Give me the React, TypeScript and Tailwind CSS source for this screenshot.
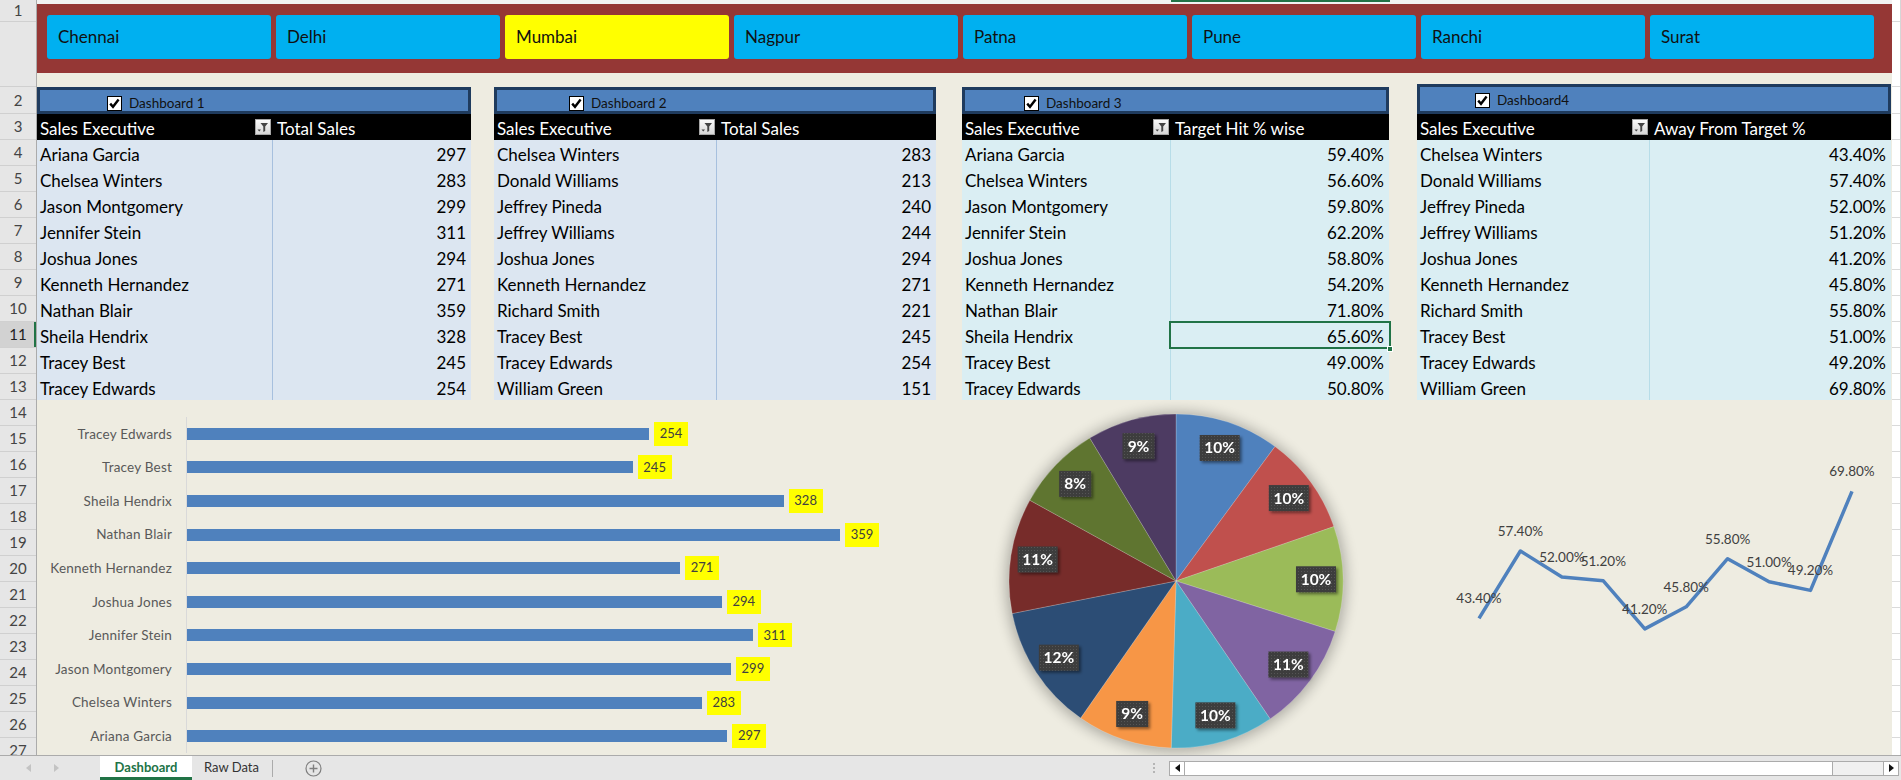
import React from 'react';

type Row = [string, string];

const t1: Row[] = [
  ['Ariana Garcia', '297'],
  ['Chelsea Winters', '283'],
  ['Jason Montgomery', '299'],
  ['Jennifer Stein', '311'],
  ['Joshua Jones', '294'],
  ['Kenneth Hernandez', '271'],
  ['Nathan Blair', '359'],
  ['Sheila Hendrix', '328'],
  ['Tracey Best', '245'],
  ['Tracey Edwards', '254'],
];
const t2: Row[] = [
  ['Chelsea Winters', '283'],
  ['Donald Williams', '213'],
  ['Jeffrey Pineda', '240'],
  ['Jeffrey Williams', '244'],
  ['Joshua Jones', '294'],
  ['Kenneth Hernandez', '271'],
  ['Richard Smith', '221'],
  ['Tracey Best', '245'],
  ['Tracey Edwards', '254'],
  ['William Green', '151'],
];
const t3: Row[] = [
  ['Ariana Garcia', '59.40%'],
  ['Chelsea Winters', '56.60%'],
  ['Jason Montgomery', '59.80%'],
  ['Jennifer Stein', '62.20%'],
  ['Joshua Jones', '58.80%'],
  ['Kenneth Hernandez', '54.20%'],
  ['Nathan Blair', '71.80%'],
  ['Sheila Hendrix', '65.60%'],
  ['Tracey Best', '49.00%'],
  ['Tracey Edwards', '50.80%'],
];
const t4: Row[] = [
  ['Chelsea Winters', '43.40%'],
  ['Donald Williams', '57.40%'],
  ['Jeffrey Pineda', '52.00%'],
  ['Jeffrey Williams', '51.20%'],
  ['Joshua Jones', '41.20%'],
  ['Kenneth Hernandez', '45.80%'],
  ['Richard Smith', '55.80%'],
  ['Tracey Best', '51.00%'],
  ['Tracey Edwards', '49.20%'],
  ['William Green', '69.80%'],
];

const cities = ['Chennai', 'Delhi', 'Mumbai', 'Nagpur', 'Patna', 'Pune', 'Ranchi', 'Surat'];

const rowHeads: { label: string; cls: string; sel?: boolean }[] = [
  { label: '1', cls: 'h-[22px]' },
  { label: '', cls: 'h-[65px]' },
  { label: '2', cls: 'h-[27px]' },
  ...Array.from({ length: 25 }, (_, i) => ({ label: String(i + 3), cls: 'h-[26px]', sel: i + 3 === 11 })),
];

const barData: Row[] = [
  ['Tracey Edwards', '254'],
  ['Tracey Best', '245'],
  ['Sheila Hendrix', '328'],
  ['Nathan Blair', '359'],
  ['Kenneth Hernandez', '271'],
  ['Joshua Jones', '294'],
  ['Jennifer Stein', '311'],
  ['Jason Montgomery', '299'],
  ['Chelsea Winters', '283'],
  ['Ariana Garcia', '297'],
];

const pieColors = ['#4F81BD', '#C0504D', '#9BBB59', '#8064A2', '#4BACC6', '#F79646', '#2C4D75', '#772C2A', '#5F7530', '#4D3B62'];

function CheckBox() {
  return (
    <svg width="15" height="15" viewBox="0 0 15 15" className="shrink-0">
      <rect x="0.5" y="0.5" width="14" height="14" fill="#fff" stroke="#000" />
      <path d="M3.2 7.6 L6 10.8 L11.6 3.6" fill="none" stroke="#000" strokeWidth="2.4" strokeLinejoin="miter" />
    </svg>
  );
}

function FilterIcon() {
  return (
    <svg width="16" height="16" viewBox="0 0 16 16" className="shrink-0">
      <defs>
        <linearGradient id="fg" x1="0" y1="0" x2="0" y2="1">
          <stop offset="0" stopColor="#fbfbfb" />
          <stop offset="1" stopColor="#d6d6d6" />
        </linearGradient>
      </defs>
      <rect x="0.5" y="0.5" width="15" height="15" fill="url(#fg)" stroke="#a6a6a6" />
      <path d="M5.5 4 H13 L10.2 7.4 V12 L8.3 13 V7.4 Z" fill="#444" />
      <path d="M2.5 10.5 H6 L4.25 12.5 Z" fill="#444" />
    </svg>
  );
}

function Dash({
  title,
  rows,
  wrap,
  bar,
  chkPad,
  w1,
  h2,
  bg,
  divider,
  sel,
}: {
  title: string;
  rows: Row[];
  wrap: string;
  bar: string;
  chkPad: string;
  w1: string;
  h2: string;
  bg: string;
  divider: string;
  sel?: number;
}) {
  return (
    <div className={`${wrap} flex flex-col shrink-0`}>
      <div className={`${bar} ${chkPad} bg-[#4f81bd] border-[3px] border-[#1f3b5e] flex items-end gap-[7px]`}>
        <CheckBox />
        <span className="text-[13.5px] leading-[16px] text-[#111]">{title}</span>
      </div>
      <div className="h-[26px] bg-black text-white text-[17px] flex">
        <div className={`${w1} flex items-center justify-between pl-[3px] pr-[2px]`}>
          <span className="h-[26px] leading-[24px] pt-[3px]">Sales Executive</span>
          <FilterIcon />
        </div>
        <div className="flex-1 pl-[4px] h-[26px] leading-[24px] pt-[3px]">{h2}</div>
      </div>
      {rows.map((r, i) => (
        <div key={i} className={`h-[26px] flex text-[17px] text-black ${bg}`}>
          <div className={`${w1} ${divider} border-r pl-[3px] leading-[24px] pt-[3px] whitespace-nowrap`}>{r[0]}</div>
          <div className="flex-1 relative text-right pr-[5px] leading-[24px] pt-[3px]">
            {r[1]}
            {sel === i && (
              <>
                <div className="absolute -left-[2px] -top-[1px] -right-[2px] -bottom-[1px] border-2 border-[#217346]" />
                <div className="absolute -right-[4px] -bottom-[4px] w-[6px] h-[6px] bg-[#217346] border border-white" />
              </>
            )}
          </div>
        </div>
      ))}
    </div>
  );
}

function BarChart() {
  return (
    <div className="w-[943px] shrink-0 flex pt-[17px]">
      <div className="w-[149px] flex flex-col">
        {barData.map((r, i) => (
          <div key={i} className="h-[33.6px] flex items-center justify-end pr-[14px] text-[13.5px] text-[#595959] tracking-[0.2px]">
            {r[0]}
          </div>
        ))}
      </div>
      <div className="h-[336px] border-l border-[#d9d9d9] flex flex-col">
        {barData.map((r, i) => (
          <div key={i} className="h-[33.6px] flex items-center">
            <div className="h-[12px] bg-[#4f81bd]" style={{ width: `${Number(r[1]) * 1.819}px` }} />
            <div className="ml-[5px] w-[34px] h-[24px] bg-[#ffff00] flex items-center justify-center text-[13px] text-[#404040]">
              {r[1]}
            </div>
          </div>
        ))}
      </div>
    </div>
  );
}

function PieChart() {
  const vals = t1.map((r) => Number(r[1]));
  const total = vals.reduce((a, b) => a + b, 0);
  const cx = 196;
  const cy = 181;
  const r = 167;
  let acc = 0;
  const slices = vals.map((v, i) => {
    const a0 = (acc / total) * 2 * Math.PI;
    acc += v;
    const a1 = (acc / total) * 2 * Math.PI;
    const p = (a: number) => [cx + r * Math.sin(a), cy - r * Math.cos(a)];
    const [x0, y0] = p(a0);
    const [x1, y1] = p(a1);
    const d = `M${cx},${cy} L${x0.toFixed(2)},${y0.toFixed(2)} A${r},${r} 0 0 1 ${x1.toFixed(2)},${y1.toFixed(2)} Z`;
    const mid = (a0 + a1) / 2;
    const lx = cx + 140 * Math.sin(mid);
    const ly = cy - 140 * Math.cos(mid);
    const pct = `${Math.round((v / total) * 100)}%`;
    return { d, lx, ly, pct, color: pieColors[i] };
  });
  return (
    <svg width="420" height="355" className="shrink-0">
      <defs>
        <filter id="pshadow" x="-20%" y="-20%" width="140%" height="140%">
          <feGaussianBlur stdDeviation="7" />
        </filter>
        <filter id="lshadow" x="-30%" y="-30%" width="160%" height="160%">
          <feDropShadow dx="2" dy="2" stdDeviation="1.5" floodColor="#000" floodOpacity="0.45" />
        </filter>
        <pattern id="dots" width="3" height="3" patternUnits="userSpaceOnUse">
          <rect width="3" height="3" fill="#3d3d3d" />
          <rect width="1" height="1" fill="#555" />
        </pattern>
      </defs>
      <circle cx={cx} cy={cy + 1} r={r + 3} fill="#000" opacity="0.28" filter="url(#pshadow)" />
      {slices.map((s, i) => (
        <path key={i} d={s.d} fill={s.color} stroke="#ffffff" strokeOpacity="0.25" strokeWidth="0.8" />
      ))}
      {slices.map((s, i) => {
        const w = s.pct.length === 3 ? 40 : 32;
        return (
          <g key={i} filter="url(#lshadow)">
            <rect x={s.lx - w / 2} y={s.ly - 13} width={w} height={26} fill="url(#dots)" />
            <text x={s.lx} y={s.ly + 5.5} textAnchor="middle" fill="#fff" fontSize="15.5" fontWeight="700">
              {s.pct}
            </text>
          </g>
        );
      })}
    </svg>
  );
}

function LineChart() {
  const vals = t4.map((r) => parseFloat(r[1]));
  const pts = vals.map((v, i) => [79 + i * 41.44, 151 - (v - 57.4) * 4.81]);
  return (
    <svg width="492" height="355" className="shrink-0">
      <polyline
        points={pts.map((p) => `${p[0].toFixed(1)},${p[1].toFixed(1)}`).join(' ')}
        fill="none"
        stroke="#4F81BD"
        strokeWidth="3.5"
        strokeLinejoin="round"
      />
      {pts.map((p, i) => (
        <text key={i} x={p[0]} y={p[1] - 15} textAnchor="middle" fontSize="13.5" fill="#404040">
          {t4[i][1]}
        </text>
      ))}
    </svg>
  );
}

function Tri({ dir, cls }: { dir: 'l' | 'r'; cls: string }) {
  return (
    <svg width="5" height="8" viewBox="0 0 5 8" className={cls}>
      {dir === 'l' ? <path d="M5 0 V8 L0 4 Z" /> : <path d="M0 0 V8 L5 4 Z" />}
    </svg>
  );
}

function TabBar() {
  return (
    <div className="h-[25px] border-t border-[#ababab] bg-[#e6e6e6] flex items-stretch text-[13px] shrink-0">
      <div className="w-[100px] flex items-center pl-[26px] gap-[23px]">
        <Tri dir="l" cls="fill-[#c3c3c3]" />
        <Tri dir="r" cls="fill-[#c3c3c3]" />
      </div>
      <div className="w-[92px] bg-white flex items-center justify-center font-bold text-[#217346] border-b-[3px] border-[#217346] pt-[2px]">
        Dashboard
      </div>
      <div className="w-[80px] flex items-center pl-[12px] text-[#333]">Raw Data</div>
      <div className="w-px h-[17px] self-center bg-[#ababab]" />
      <div className="ml-[32px] flex items-center">
        <svg width="17" height="17" viewBox="0 0 17 17">
          <circle cx="8.5" cy="8.5" r="7.5" fill="none" stroke="#7f7f7f" strokeWidth="1.2" />
          <path d="M8.5 4.5 V12.5 M4.5 8.5 H12.5" stroke="#7f7f7f" strokeWidth="1.4" />
        </svg>
      </div>
      <div className="flex-1" />
      <div className="w-[2px] flex flex-col justify-center gap-[2px]">
        <div className="h-[2px] bg-[#b5b5b5]" />
        <div className="h-[2px] bg-[#b5b5b5]" />
        <div className="h-[2px] bg-[#b5b5b5]" />
      </div>
      <div className="ml-[14px] mr-[2px] w-[730px] h-[15px] self-center border border-[#ababab] flex bg-white">
        <div className="w-[15px] border-r border-[#ababab] flex items-center justify-center">
          <Tri dir="l" cls="fill-[#111]" />
        </div>
        <div className="flex-1 bg-white" />
        <div className="w-[51px] bg-[#f0f0f0] border-l border-[#ababab]" />
        <div className="w-[15px] border-l border-[#ababab] flex items-center justify-center bg-white">
          <Tri dir="r" cls="fill-[#111]" />
        </div>
      </div>
    </div>
  );
}

export default function App() {
  return (
    <div className="w-[1901px] h-[780px] overflow-hidden flex flex-col bg-[#eeece1] [font-family:Lato,sans-serif]">
      <div className="h-[755px] flex overflow-hidden shrink-0">
        <div className="w-[37px] shrink-0 bg-[#e6e6e6] border-r border-[#ababab] flex flex-col">
          {rowHeads.map((r, i) => (
            <div
              key={i}
              className={`${r.cls} shrink-0 flex items-center justify-center border-b border-[#d0d0d0] text-[15px] ${
                r.sel ? 'bg-[#d2d2d2] text-[#222] shadow-[inset_-2px_0_0_#217346]' : 'text-[#444]'
              }`}
            >
              {r.label}
            </div>
          ))}
        </div>

        <div className="w-[1855px] shrink-0 flex flex-col">
          <div className="h-[4px] flex bg-[#f2f2f2] shrink-0">
            <div className="w-[1134px]" />
            <div className="w-[219px] h-[2px] bg-[#217346]" />
          </div>
          <div className="h-[69px] bg-[#953735] flex gap-[5px] pl-[10px] pt-[11px] shrink-0">
            {cities.map((c) => (
              <div
                key={c}
                className={`w-[224px] h-[44px] rounded-[3px] flex items-center pl-[11px] text-[17px] text-[#111] ${
                  c === 'Mumbai' ? 'bg-[#ffff00]' : 'bg-[#00b0f0]'
                }`}
              >
                {c}
              </div>
            ))}
          </div>
          <div className="h-[11px] shrink-0" />
          <div className="h-[316px] flex items-end shrink-0">
            <Dash
              title="Dashboard 1"
              rows={t1}
              wrap="w-[434px]"
              bar="h-[27px]"
              chkPad="pl-[67px]"
              w1="w-[236px]"
              h2="Total Sales"
              bg="bg-[#dce6f1]"
              divider="border-[#a7c0de]"
            />
            <Dash
              title="Dashboard 2"
              rows={t2}
              wrap="w-[442px] ml-[23px]"
              bar="h-[27px]"
              chkPad="pl-[72px]"
              w1="w-[223px]"
              h2="Total Sales"
              bg="bg-[#dce6f1]"
              divider="border-[#a7c0de]"
            />
            <Dash
              title="Dashboard 3"
              rows={t3}
              wrap="w-[427px] ml-[26px]"
              bar="h-[27px]"
              chkPad="pl-[59px]"
              w1="w-[209px]"
              h2="Target Hit % wise"
              bg="bg-[#daeef3]"
              divider="border-[#b7dde8]"
              sel={7}
            />
            <Dash
              title="Dashboard4"
              rows={t4}
              wrap="w-[474px] ml-[28px]"
              bar="h-[30px] pb-[3px]"
              chkPad="pl-[55px]"
              w1="w-[233px]"
              h2="Away From Target %"
              bg="bg-[#daeef3]"
              divider="border-[#b7dde8]"
            />
          </div>
          <div className="h-[355px] flex shrink-0">
            <BarChart />
            <PieChart />
            <LineChart />
          </div>
        </div>

        <div className="w-[9px] shrink-0 bg-white border-r border-[#d6d6d6] flex flex-col">
          {rowHeads.map((r, i) => (
            <div key={i} className={`${r.cls} shrink-0 border-b border-[#dadada]`} />
          ))}
        </div>
      </div>
      <TabBar />
    </div>
  );
}
